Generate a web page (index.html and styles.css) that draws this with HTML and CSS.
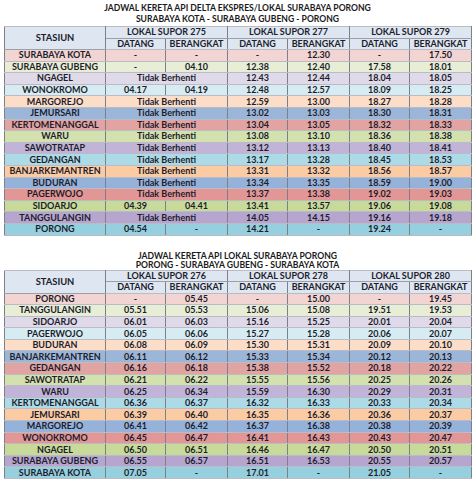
FILE: index.html
```html
<!DOCTYPE html>
<html>
<head>
<meta charset="utf-8">
<link rel="stylesheet" href="styles.css">
</head>
<body>
<div class="page">
  <section class="sched sched-1">
    <div class="titles">
      <div class="t1">JADWAL KERETA API DELTA EKSPRES/LOKAL SURABAYA PORONG</div>
      <div class="t2">SURABAYA KOTA - SURABAYA GUBENG - PORONG</div>
    </div>
    <table class="tbl">
      <colgroup><col class="c-st"><col class="c-d"><col class="c-b"><col class="c-d"><col class="c-b"><col class="c-d"><col class="c-b"></colgroup>
      <thead>
        <tr class="h1"><th rowspan="2">STASIUN</th><th colspan="2">LOKAL SUPOR 275</th><th colspan="2">LOKAL SUPOR 277</th><th colspan="2">LOKAL SUPOR 279</th></tr>
        <tr class="h2"><th>DATANG</th><th>BERANGKAT</th><th>DATANG</th><th>BERANGKAT</th><th>DATANG</th><th>BERANGKAT</th></tr>
      </thead>
      <tbody>
        <tr class="r1"><td>SURABAYA KOTA</td><td>-</td><td>-</td><td>-</td><td>12.30</td><td>-</td><td>17.50</td></tr>
        <tr class="r2"><td>SURABAYA GUBENG</td><td>-</td><td>04.10</td><td>12.38</td><td>12.40</td><td>17.58</td><td>18.01</td></tr>
        <tr class="r3"><td>NGAGEL</td><td colspan="2">Tidak Berhenti</td><td>12.43</td><td>12.44</td><td>18.04</td><td>18.05</td></tr>
        <tr class="r4"><td>WONOKROMO</td><td>04.17</td><td>04.19</td><td>12.48</td><td>12.57</td><td>18.09</td><td>18.25</td></tr>
        <tr class="r5"><td>MARGOREJO</td><td colspan="2">Tidak Berhenti</td><td>12.59</td><td>13.00</td><td>18.27</td><td>18.28</td></tr>
        <tr class="r6"><td>JEMURSARI</td><td colspan="2">Tidak Berhenti</td><td>13.02</td><td>13.03</td><td>18.30</td><td>18.31</td></tr>
        <tr class="r7"><td>KERTOMENANGGAL</td><td colspan="2">Tidak Berhenti</td><td>13.04</td><td>13.05</td><td>18.32</td><td>18.33</td></tr>
        <tr class="r8"><td>WARU</td><td colspan="2">Tidak Berhenti</td><td>13.08</td><td>13.10</td><td>18.36</td><td>18.38</td></tr>
        <tr class="r9"><td>SAWOTRATAP</td><td colspan="2">Tidak Berhenti</td><td>13.12</td><td>13.13</td><td>18.40</td><td>18.41</td></tr>
        <tr class="r10"><td>GEDANGAN</td><td colspan="2">Tidak Berhenti</td><td>13.17</td><td>13.28</td><td>18.45</td><td>18.53</td></tr>
        <tr class="r11"><td>BANJARKEMANTREN</td><td colspan="2">Tidak Berhenti</td><td>13.31</td><td>13.32</td><td>18.56</td><td>18.57</td></tr>
        <tr class="r12"><td>BUDURAN</td><td colspan="2">Tidak Berhenti</td><td>13.34</td><td>13.35</td><td>18.59</td><td>19.00</td></tr>
        <tr class="r13"><td>PAGERWOJO</td><td colspan="2">Tidak Berhenti</td><td>13.37</td><td>13.38</td><td>19.02</td><td>19.03</td></tr>
        <tr class="r14"><td>SIDOARJO</td><td>04.39</td><td>04.41</td><td>13.41</td><td>13.57</td><td>19.06</td><td>19.08</td></tr>
        <tr class="r15"><td>TANGGULANGIN</td><td colspan="2">Tidak Berhenti</td><td>14.05</td><td>14.15</td><td>19.16</td><td>19.18</td></tr>
        <tr class="r16"><td>PORONG</td><td>04.54</td><td>-</td><td>14.21</td><td>-</td><td>19.24</td><td>-</td></tr>
      </tbody>
    </table>
  </section>

  <section class="sched sched-2">
    <div class="titles">
      <div class="t1">JADWAL KERETA API LOKAL SURABAYA PORONG</div>
      <div class="t2">PORONG - SURABAYA GUBENG - SURABAYA KOTA</div>
    </div>
    <table class="tbl">
      <colgroup><col class="c-st"><col class="c-d"><col class="c-b"><col class="c-d"><col class="c-b"><col class="c-d"><col class="c-b"></colgroup>
      <thead>
        <tr class="h1"><th rowspan="2">STASIUN</th><th colspan="2">LOKAL SUPOR 276</th><th colspan="2">LOKAL SUPOR 278</th><th colspan="2">LOKAL SUPOR 280</th></tr>
        <tr class="h2"><th>DATANG</th><th>BERANGKAT</th><th>DATANG</th><th>BERANGKAT</th><th>DATANG</th><th>BERANGKAT</th></tr>
      </thead>
      <tbody>
        <tr class="r1"><td>PORONG</td><td>-</td><td>05.45</td><td>-</td><td>15.00</td><td>-</td><td>19.45</td></tr>
        <tr class="r2"><td>TANGGULANGIN</td><td>05.51</td><td>05.53</td><td>15.06</td><td>15.08</td><td>19.51</td><td>19.53</td></tr>
        <tr class="r3"><td>SIDOARJO</td><td>06.01</td><td>06.03</td><td>15.16</td><td>15.25</td><td>20.01</td><td>20.04</td></tr>
        <tr class="r4"><td>PAGERWOJO</td><td>06.05</td><td>06.06</td><td>15.27</td><td>15.28</td><td>20.06</td><td>20.07</td></tr>
        <tr class="r5"><td>BUDURAN</td><td>06.08</td><td>06.09</td><td>15.30</td><td>15.31</td><td>20.09</td><td>20.10</td></tr>
        <tr class="r6"><td>BANJARKEMANTREN</td><td>06.11</td><td>06.12</td><td>15.33</td><td>15.34</td><td>20.12</td><td>20.13</td></tr>
        <tr class="r7"><td>GEDANGAN</td><td>06.16</td><td>06.18</td><td>15.38</td><td>15.52</td><td>20.18</td><td>20.22</td></tr>
        <tr class="r8"><td>SAWOTRATAP</td><td>06.21</td><td>06.22</td><td>15.55</td><td>15.56</td><td>20.25</td><td>20.26</td></tr>
        <tr class="r9"><td>WARU</td><td>06.25</td><td>06.34</td><td>15.59</td><td>16.30</td><td>20.29</td><td>20.31</td></tr>
        <tr class="r10"><td>KERTOMENANGGAL</td><td>06.36</td><td>06.37</td><td>16.32</td><td>16.33</td><td>20.33</td><td>20.34</td></tr>
        <tr class="r11"><td>JEMURSARI</td><td>06.39</td><td>06.40</td><td>16.35</td><td>16.36</td><td>20.36</td><td>20.37</td></tr>
        <tr class="r12"><td>MARGOREJO</td><td>06.41</td><td>06.42</td><td>16.37</td><td>16.38</td><td>20.38</td><td>20.39</td></tr>
        <tr class="r13"><td>WONOKROMO</td><td>06.45</td><td>06.47</td><td>16.41</td><td>16.43</td><td>20.43</td><td>20.47</td></tr>
        <tr class="r14"><td>NGAGEL</td><td>06.50</td><td>06.51</td><td>16.46</td><td>16.47</td><td>20.50</td><td>20.51</td></tr>
        <tr class="r15"><td>SURABAYA GUBENG</td><td>06.55</td><td>06.57</td><td>16.51</td><td>16.53</td><td>20.55</td><td>20.57</td></tr>
        <tr class="r16"><td>SURABAYA KOTA</td><td>07.05</td><td>-</td><td>17.01</td><td>-</td><td>21.05</td><td>-</td></tr>
      </tbody>
    </table>
  </section>
</div>
</body>
</html>
```

FILE: styles.css
```css
html, body {
  margin: 0;
  padding: 0;
  background: #ffffff;
}
.page {
  width: 474px;
  padding: 0 0 0 4px;
  box-sizing: border-box;
  font-family: Lato, "Open Sans", sans-serif;
  font-weight: 700;
  color: #1d1d2b;
}
.sched-1 {
  padding-top: 3px;
}
.sched-2 {
  padding-top: 15px;
}
.titles {
  width: 467px;
  text-align: center;
  font-size: 8.6px;
  color: #1a1a1a;
}
.sched-1 .titles { height: 23px; }
.sched-2 .titles { height: 19px; }
.sched-1 .t1 { line-height: 11px; }
.sched-1 .t2 { line-height: 11px; }
.sched-2 .t1 { line-height: 10px; }
.sched-2 .t2 { line-height: 9px; }

.tbl {
  width: 467px;
  table-layout: fixed;
  border-collapse: collapse;
  border: 1px solid #6e7480;
  font-size: 9px;
}
.c-st { width: 101px; }
.c-d { width: 60px; }
.c-b { width: 62px; }
.tbl th, .tbl td {
  padding: 0;
  text-align: center;
  white-space: nowrap;
  overflow: hidden;
  border-left: 1px solid #7d8088;
  border-right: 1px solid #7d8088;
  border-top: 1px solid #b9bcc4;
  border-bottom: 1px solid #b9bcc4;
}
.tbl th {
  background: #dde6f1;
  font-weight: 700;
  color: #1d1d2b;
  height: 10.5px;
  line-height: 10px;
}
.tbl th[rowspan] { font-size: 9.4px; }
.tbl thead .h1 th { border-bottom: 1px solid #9aa0aa; }
.tbl td {
  height: 10.6px;
  line-height: 10px;
}
.r1 td { background: #f2d4d2; }
.r2 td { background: #e7eed5; }
.r3 td { background: #dfd9e9; }
.r4 td { background: #d6ecf2; }
.r5 td { background: #fcddc8; }
.r6 td { background: #9bb6d9; }
.r7 td { background: #e2a3a3; }
.r8 td { background: #d3e1af; }
.r9 td { background: #c1b4d8; }
.r10 td { background: #acdae7; }
.r11 td { background: #fbcba4; }
.r12 td { background: #95b2db; }
.r13 td { background: #e39696; }
.r14 td { background: #c8da9a; }
.r15 td { background: #b5a5cf; }
.r16 td { background: #96d0df; }
```
